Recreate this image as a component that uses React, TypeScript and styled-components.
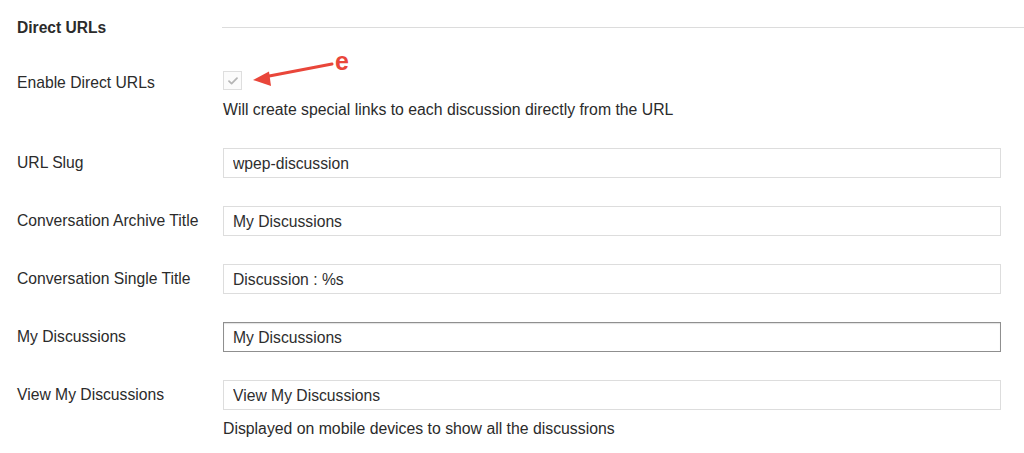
import React from "react";
import styled, { createGlobalStyle } from "styled-components";

const Global = createGlobalStyle`
  html, body { margin: 0; padding: 0; background: #fff; }
  body { font-family: "Liberation Sans", Arial, sans-serif; color: #333; }
`;

const Page = styled.div`
  position: relative;
  width: 1024px;
  height: 453px;
  overflow: hidden;
  background: #fff;
`;

const Form = styled.div`
  display: flex;
  flex-direction: column;
  padding-left: 17px;
`;

const HeaderRow = styled.div`
  display: grid;
  grid-template-columns: 205px 1fr;
  align-items: center;
  height: 55px;
`;

const Heading = styled.h3`
  margin: 0;
  font-size: 15.6px;
  font-weight: 700;
  color: #2b2b2b;
`;

const Rule = styled.div`
  height: 1px;
  background: #dcdcdc;
`;

const Row = styled.div<{ $top: number }>`
  display: grid;
  grid-template-columns: 206px 778px;
  align-items: start;
  margin-top: ${(p) => p.$top}px;
`;

const FieldRow = styled.div<{ $gap: number }>`
  display: grid;
  grid-template-columns: 206px 778px;
  grid-template-rows: 30px auto;
  margin-top: ${(p) => p.$gap}px;
`;

const Label = styled.label<{ $mt?: number }>`
  margin-top: ${(p) => p.$mt ?? 0}px;
  font-size: 15.7px;
  line-height: 20px;
  color: #2b2b2b;
`;

const Cell = styled.div`
  display: flex;
  flex-direction: column;
`;

const Checkbox = styled.span`
  display: inline-flex;
  align-items: center;
  justify-content: center;
  width: 17px;
  height: 17px;
  border: 1px solid #dedede;
  background: #fbfbfb;
  box-sizing: content-box;
`;

const Description = styled.p<{ $mt: number }>`
  margin: ${(p) => p.$mt}px 0 0;
  font-size: 15.8px;
  line-height: 20px;
  color: #2b2b2b;
`;

const Input = styled.input<{ $focus?: boolean }>`
  box-sizing: border-box;
  width: 778px;
  height: 30px;
  margin: 0;
  padding: 1px 9px 0;
  border: ${(p) => (p.$focus ? "1px solid #8f8f8f" : "1px solid #dddddd")};
  border-radius: 0;
  box-shadow: ${(p) => (p.$focus ? "inset 0 1px 1px rgba(0,0,0,0.12)" : "none")};
  background: #fff;
  font-family: "Liberation Sans", Arial, sans-serif;
  font-size: 15.7px;
  color: #2e2e2e;
  outline: none;
`;

const LabelCell = styled.div`
  display: flex;
  align-items: center;
`;

const Annotation = styled.svg`
  position: absolute;
  left: 240px;
  top: 45px;
`;

const fields = [
  { label: "URL Slug", value: "wpep-discussion", gap: 28 },
  { label: "Conversation Archive Title", value: "My Discussions", gap: 28 },
  { label: "Conversation Single Title", value: "Discussion : %s", gap: 28 },
  { label: "My Discussions", value: "My Discussions", gap: 28, focus: true },
  {
    label: "View My Discussions",
    value: "View My Discussions",
    gap: 28,
    desc: "Displayed on mobile devices to show all the discussions",
  },
];

export default function App() {
  return (
    <Page>
      <Global />
      <Form>
        <HeaderRow>
          <Heading>Direct URLs</Heading>
          <Rule />
        </HeaderRow>
        <Row $top={16}>
          <Label $mt={2}>Enable Direct URLs</Label>
          <Cell>
            <Checkbox>
              <svg width="12" height="10" viewBox="0 0 12 10">
                <path d="M2 5.2 L4.6 7.6 L10 2.2" fill="none" stroke="#b5b5b5" strokeWidth="1.8" strokeLinecap="round" strokeLinejoin="round" />
              </svg>
            </Checkbox>
            <Description $mt={10}>Will create special links to each discussion directly from the URL</Description>
          </Cell>
        </Row>
        {fields.map((f) => (
          <FieldRow key={f.label} $gap={f.gap}>
            <LabelCell>
              <Label>{f.label}</Label>
            </LabelCell>
            <Input defaultValue={f.value} $focus={f.focus} readOnly />
            {f.desc ? (
              <>
                <span />
                <Description $mt={9}>{f.desc}</Description>
              </>
            ) : null}
          </FieldRow>
        ))}
      </Form>
      <Annotation width="130" height="50" viewBox="0 0 130 50">
        <line x1="92" y1="19" x2="24" y2="32" stroke="#e9463a" strokeWidth="3" strokeLinecap="round" />
        <polygon points="13,35 29,26.5 31,41" fill="#e9463a" />
        <text x="95" y="25" fill="#e9463a" fontFamily="Liberation Sans, Arial, sans-serif" fontWeight="700" fontSize="25">e</text>
      </Annotation>
    </Page>
  );
}
